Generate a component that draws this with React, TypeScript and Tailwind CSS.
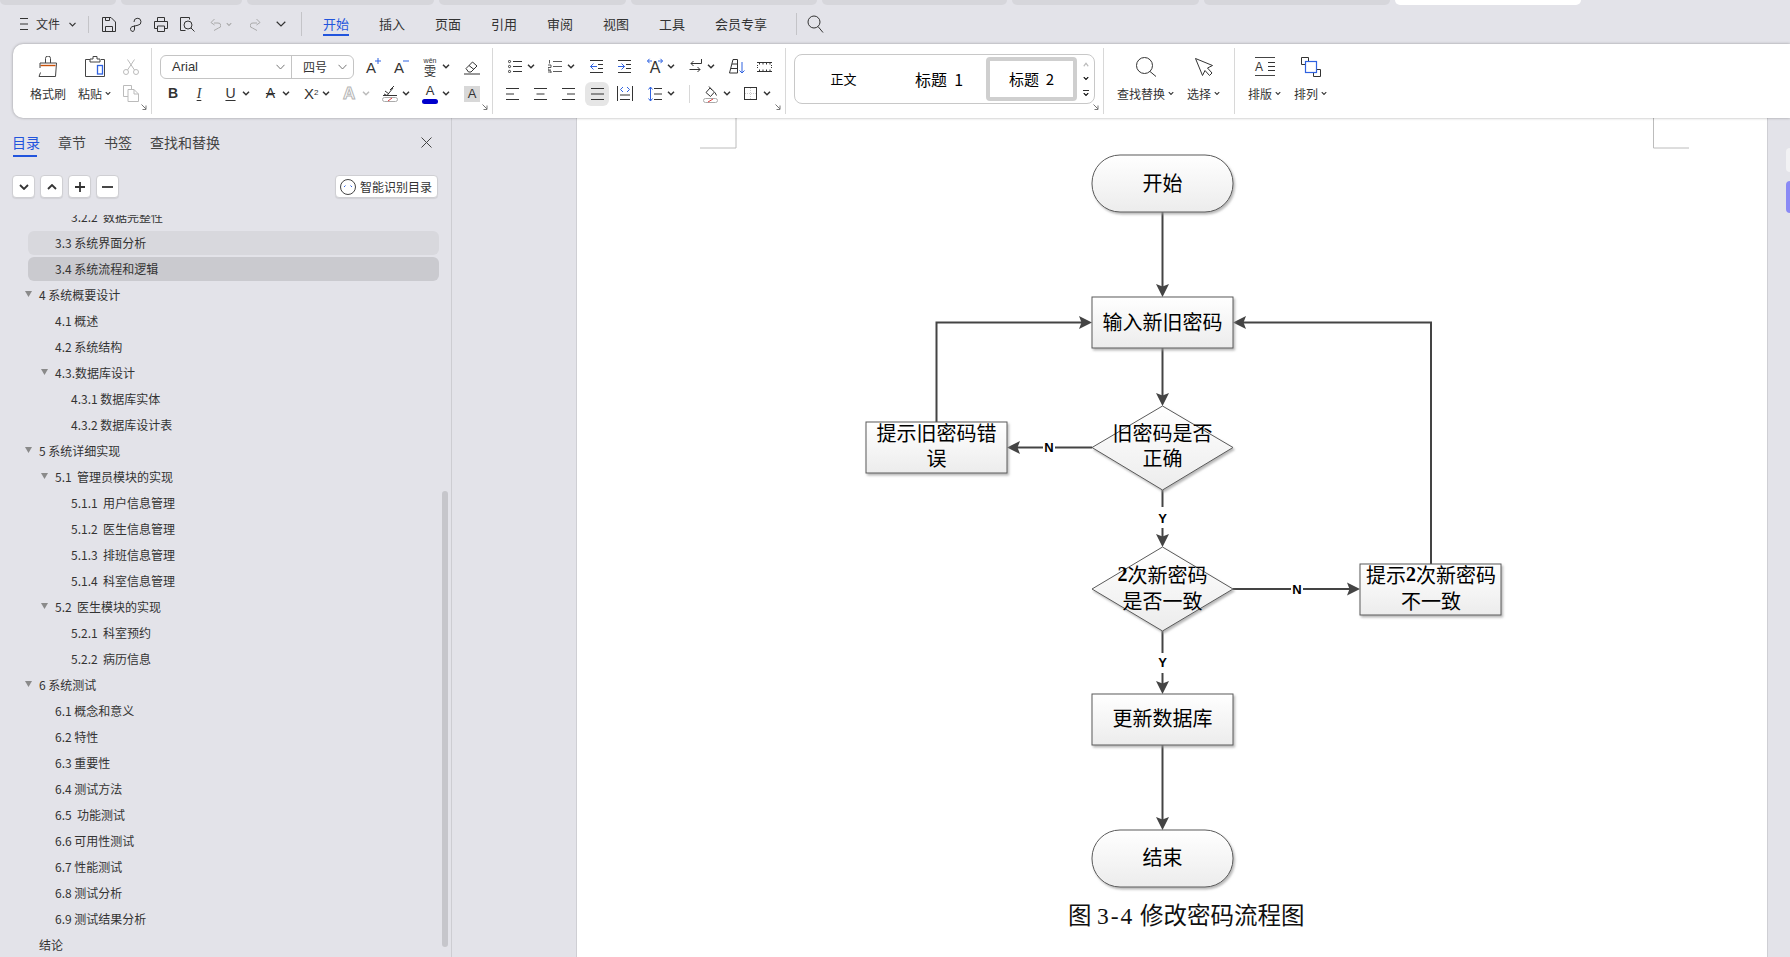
import type { ReactNode } from "react";

const tree: { text: string; level: 1 | 2 | 3; arrow?: boolean; mark?: 1 | 2 }[] = [
  { text: "3.2.2  数据完整性", level: 3 },
  { text: "3.3 系统界面分析", level: 2, mark: 1 },
  { text: "3.4 系统流程和逻辑", level: 2, mark: 2 },
  { text: "4 系统概要设计", level: 1, arrow: true },
  { text: "4.1 概述", level: 2 },
  { text: "4.2 系统结构", level: 2 },
  { text: "4.3.数据库设计", level: 2, arrow: true },
  { text: "4.3.1 数据库实体", level: 3 },
  { text: "4.3.2 数据库设计表", level: 3 },
  { text: "5 系统详细实现", level: 1, arrow: true },
  { text: "5.1  管理员模块的实现", level: 2, arrow: true },
  { text: "5.1.1  用户信息管理", level: 3 },
  { text: "5.1.2  医生信息管理", level: 3 },
  { text: "5.1.3  排班信息管理", level: 3 },
  { text: "5.1.4  科室信息管理", level: 3 },
  { text: "5.2  医生模块的实现", level: 2, arrow: true },
  { text: "5.2.1  科室预约", level: 3 },
  { text: "5.2.2  病历信息", level: 3 },
  { text: "6 系统测试", level: 1, arrow: true },
  { text: "6.1 概念和意义", level: 2 },
  { text: "6.2 特性", level: 2 },
  { text: "6.3 重要性", level: 2 },
  { text: "6.4 测试方法", level: 2 },
  { text: "6.5  功能测试", level: 2 },
  { text: "6.6 可用性测试", level: 2 },
  { text: "6.7 性能测试", level: 2 },
  { text: "6.8 测试分析", level: 2 },
  { text: "6.9 测试结果分析", level: 2 },
  { text: "结论", level: 1 },
];

const arial = "font-['Liberation_Sans','Noto_Sans_CJK_SC',sans-serif]";

function Ico({
  w,
  h,
  className = "",
  children,
}: {
  w: number;
  h: number;
  className?: string;
  children: ReactNode;
}) {
  return (
    <svg
      width={w}
      height={h}
      viewBox={`0 0 ${w} ${h}`}
      fill="none"
      stroke="currentColor"
      strokeWidth="1"
      className={"shrink-0 block " + className}
    >
      {children}
    </svg>
  );
}

function Caret({ className = "" }: { className?: string }) {
  return (
    <Ico w={8} h={5} className={className}>
      <path d="M1 .8 4 3.800 7 .8" strokeWidth="1.5" />
    </Ico>
  );
}

function Corner({ className = "" }: { className?: string }) {
  return (
    <Ico w={6} h={6} className={"absolute text-[#777] " + className}>
      <path d="M.5.5 5 5M5 1.500V5.500H1.500" />
    </Ico>
  );
}

function Blue({ d }: { d: string }) {
  return <path d={d} stroke="#2f62e0" />;
}

function MenuBar() {
  return (
    <div className="flex items-center h-[38px] mb-px text-[#333] text-[13px]">
      <Ico w={8} h={12} className="ml-[20px]">
        <path d="M0 .5h8M0 6h8M0 11.500h8" />
      </Ico>
      <span className="ml-[8px] w-[24px] text-[12px]">文件</span>
      <Ico w={7} h={5} className="ml-[9px]">
        <path d="M.5.8 3.500 3.800 6.500.8" strokeWidth="1.2" />
      </Ico>
      <div className="ml-[12px] w-px h-[17px] bg-[#c4c4c8]" />
      <Ico w={14} h={15} className="ml-[13px]">
        <path d="M.5.5h8.500l4.500 4.500v9.500H.5zM3.500 14.500V9.500h7v5M3.500.5v3h4v-3" />
      </Ico>
      <Ico w={12} h={15} className="ml-[14px]">
        <path d="M3 14.500a2.500 2.500 0 0 1-1-4.800l6-1.500A3.500 3.500 0 1 0 4 5M3 14.500a2.500 2.500 0 0 0 1.500-2.500V8.500" />
      </Ico>
      <Ico w={14} h={15} className="ml-[12px]">
        <path d="M3.500 4.500v-4h7v4M3.500 11.500H.5v-7h13v7h-3M3.500 9h7v5.500h-7z" />
      </Ico>
      <Ico w={15} h={15} className="ml-[12px]">
        <path d="M5.500 13.500h-5V.5h9v2" />
        <circle cx="8" cy="8" r="4" />
        <path d="M11 11l3.500 3.500" />
      </Ico>
      <Ico w={11} h={13} className="ml-[15px] text-[#aaa]">
        <path d="M4 5H8a2.500 2.500 0 0 1 .500 5L4 12.500M4.500 1 1 4.500 4.500 7" />
      </Ico>
      <Caret className="ml-[4px] text-[#aaa] scale-75" />
      <Ico w={11} h={13} className="ml-[17px] text-[#aaa]">
        <path d="M7 5H3a2.500 2.500 0 0 0-.500 5L7 12.500M6.500 1 10 4.500 6.500 7" />
      </Ico>
      <Ico w={10} h={6} className="ml-[15px]">
        <path d="M.7.8 5 5 9.300.8" strokeWidth="1.2" />
      </Ico>
      <div className="ml-[15px] w-px h-[24px] bg-[#c4c4c8]" />
      <div className="ml-[21px] flex gap-[30px]">
        <span className="relative text-[#2255dd]">
          开始
          <span className="absolute left-0 right-0 -bottom-[2px] h-[2px] bg-[#2255dd]" />
        </span>
        <span>插入</span>
        <span>页面</span>
        <span>引用</span>
        <span>审阅</span>
        <span>视图</span>
        <span>工具</span>
        <span>会员专享</span>
      </div>
      <div className="ml-[29px] w-px h-[22px] bg-[#c4c4c8]" />
      <Ico w={17} h={18} className="ml-[10px]">
        <circle cx="7" cy="7" r="6" />
        <path d="M11 11.500l5 6" />
      </Ico>
    </div>
  );
}

function Ribbon() {
  return (
    <div className="relative z-10 ml-[13px] flex items-center h-[74px] bg-white rounded-l-[10px] shadow-[0_0_3px_rgba(0,0,0,0.35)] text-[#333] text-[12px]">
      {/* clipboard */}
      <div className="relative flex h-[66px] w-[139px] pl-[9px] pt-[6px] border-r border-[#d8d8d8]">
        <div className="w-[52px] flex flex-col items-center">
          <div className="h-[25px] flex items-center">
            <Ico w={20} h={21} className="text-[#444]">
              <path d="M7.500 7V2.500a2.500 2.500 0 0 1 5 0V7M2 7h16.500l-1 13.500H1l1.500-4" />
              <path d="M2.500 9.500h15" stroke="#c8500a" strokeWidth="1.4" />
              <path d="M2 7v5" />
            </Ico>
          </div>
          <span className="mt-[2px] leading-[25px]">格式刷</span>
        </div>
        <div className="w-[42px] flex flex-col items-center">
          <div className="h-[25px] flex items-center">
            <Ico w={20} h={21} className="text-[#444]">
              <path d="M5 3.500H.5v17h19V3.500H16M5 6V3h3V.5h4V3h3v3z" />
              <rect x="12.500" y="9.500" width="5" height="8.500" stroke="#2f62e0" strokeWidth="1.3" />
            </Ico>
          </div>
          <div className="mt-[2px] flex items-center h-[25px]">
            <span>粘贴</span>
            <Caret className="ml-[2px] scale-75" />
          </div>
        </div>
        <div className="w-[30px] flex flex-col items-center gap-[2px]">
          <div className="h-[25px] flex items-center">
            <Ico w={16} h={16} className="text-[#bbb]">
              <circle cx="3" cy="13" r="2.500" />
              <circle cx="13" cy="13" r="2.500" />
              <path d="M4.500 11 11.500.5M11.500 11 4.500.5" />
            </Ico>
          </div>
          <div className="h-[25px] flex items-center">
            <Ico w={16} h={17} className="text-[#bbb]">
              <path d="M5 11.500H.5V.5h8v4M5 4.500h6l4.500 4.500v7.500H5zM11 4.500V9h4.500" />
            </Ico>
          </div>
        </div>
        <Corner className="right-[4px] bottom-[4px]" />
      </div>

      {/* font */}
      <div className="relative h-[66px] w-[341px] pt-[6px] border-r border-[#d8d8d8]">
        <div className="flex items-center h-[25px]">
          <div className="ml-[8px] w-[194px] h-[24px] flex items-center rounded-md border border-[#c4c4c4]">
            <div className="w-[131px] h-full flex items-center justify-between pl-[11px] pr-[6px] border-r border-[#c4c4c4]">
              <span className={arial + " text-[13px]"}>Arial</span>
              <Ico w={9} h={6} className="text-[#777]">
                <path d="M.5.8 4.500 5 8.500.8" />
              </Ico>
            </div>
            <div className="flex-1 flex items-center justify-between pl-[11px] pr-[6px]">
              <span>四号</span>
              <Ico w={9} h={6} className="text-[#777]">
                <path d="M.5.8 4.500 5 8.500.8" />
              </Ico>
            </div>
          </div>
          <div className={"ml-[12px] w-[14px] h-[20px] relative text-[15px] leading-[22px] " + arial}>
            A
            <Ico w={6} h={6} className="absolute right-[-1px] top-[1px]">
              <Blue d="M3 0v6M0 3h6" />
            </Ico>
          </div>
          <div className={"ml-[14px] w-[14px] h-[20px] relative text-[15px] leading-[22px] " + arial}>
            A
            <Ico w={6} h={2} className="absolute right-[-1px] top-[3px]">
              <Blue d="M0 1h6" />
            </Ico>
          </div>
          <div className="ml-[14px] w-[16px] h-[20px] flex flex-col items-center leading-none">
            <span className={"text-[7px] leading-[8px] " + arial}>wěn</span>
            <span className="text-[12px] leading-[12px]">雯</span>
          </div>
          <Caret className="ml-[4px]" />
          <Ico w={16} h={16} className="ml-[14px]">
            <path d="M2 9.500 8.500 3l4.500 4-6 6H4.500zM5 6.500l5 4M0 15h16" />
          </Ico>
        </div>
        <div className={"mt-[2px] flex items-center h-[25px] text-[14px] " + arial}>
          <span className="ml-[16px] w-[9px] font-bold">B</span>
          <span className="ml-[17px] w-[10px] italic underline underline-offset-2 font-['Liberation_Serif',serif] text-center">I</span>
          <span className="ml-[21px] w-[11px] underline underline-offset-2 text-center">U</span>
          <Caret className="ml-[6px]" />
          <span className="ml-[13px] w-[15px] line-through text-center font-light">A</span>
          <Caret className="ml-[4px]" />
          <span className="ml-[14px] w-[13px] text-[15px] leading-none">
            X<sup className="text-[8px]">2</sup>
          </span>
          <Caret className="ml-[5px]" />
          <span className="ml-[13px] w-[14px] text-[17px] font-bold text-transparent [-webkit-text-stroke:1px_#b5b5b5]">A</span>
          <Caret className="ml-[5px] text-[#bbb]" />
          <Ico w={16} h={17} className="ml-[12px]">
            <path d="M2 9 5 10.500 11 3M3 6l4 3M12 1 8 5M1 10.500h14" />
            <rect x=".5" y="12.500" width="15" height="4" rx="2" stroke="#aaa" />
            <path d="M6 16l4-3" stroke="#e03c3c" />
          </Ico>
          <Caret className="ml-[4px]" />
          <div className="ml-[12px] w-[16px] h-[20px] flex flex-col items-center leading-[14px]">
            <span className="text-[13px]">A</span>
            <span className="w-[16px] h-[5px] mt-[1px] rounded-full bg-[#0000cc]" />
          </div>
          <Caret className="ml-[4px]" />
          <span className="ml-[14px] w-[16px] h-[16px] bg-[#d8d8d8] text-center text-[13px] leading-[16px]">A</span>
        </div>
        <Corner className="right-[4px] bottom-[4px]" />
      </div>

      {/* paragraph */}
      <div className="relative h-[66px] w-[293px] pt-[6px] border-r border-[#d8d8d8]">
        <div className="flex items-center h-[25px]">
          <Ico w={14} h={13} className="ml-[15px]">
            <circle cx="1.500" cy="1.500" r="1.100" />
            <circle cx="1.500" cy="6.500" r="1.100" />
            <circle cx="1.500" cy="11.500" r="1.100" />
            <path d="M5 1.500h9M5 6.500h9M5 11.500h9" />
          </Ico>
          <Caret className="ml-[5px]" />
          <Ico w={14} h={13} className="ml-[13px]">
            <path d="M1.500 0v3.500M0 5h3v2.500H0V10h3M0 11h3v2H0M5 1.500h9M5 6.500h9M5 11.500h9" strokeWidth=".8" />
          </Ico>
          <Caret className="ml-[5px]" />
          <Ico w={13} h={13} className="ml-[15px]">
            <path d="M0 .5h13M0 12.500h13M8 4.500h5M8 8.500h5" />
            <Blue d="M.5 6.500H7M3.500 3.500l-3 3 3 3" />
          </Ico>
          <Ico w={13} h={13} className="ml-[15px]">
            <path d="M0 .5h13M0 12.500h13M8 4.500h5M8 8.500h5" />
            <Blue d="M0 6.500H6.500M3.500 3.500l3 3-3 3" />
          </Ico>
          <div className="relative ml-[16px] w-[16px] h-[18px] flex justify-center items-end">
            <Ico w={16} h={6} className="absolute left-0 top-0">
              <Blue d="M.5 3h4.500M2.500 .8.5 3l2 2.200M15.500 3H11M13.500 .8 15.500 3l-2 2.200" />
            </Ico>
            <span className={"text-[16px] leading-[16px] " + arial}>A</span>
          </div>
          <Caret className="ml-[4px]" />
          <Ico w={13} h={15} className="ml-[14px]">
            <path d="M12.500 0v4.500H2M4.500 2 2 4.500 4.500 7M.5 10.500H11M8.500 8 11 10.500 8.500 13" />
          </Ico>
          <Caret className="ml-[5px]" />
          <Ico w={16} h={15} className="ml-[14px]">
            <path d="M.5 14 4 .5h4.500V14zM3 5h5.500M2 9.500h6.500" />
            <Blue d="M13 3v11M10.500 11.500 13 14l2.500-2.500" />
          </Ico>
          <Ico w={15} h={12} className="ml-[12px]">
            <path d="M0 1.500h15M0 10.500h15M2.500 1.500v2M6 1.500v2M9.500 1.500v2M13 1.500v2M2.500 8.500v2M6 8.500v2M9.500 8.500v2M13 8.500v2" />
            <path d="M.5 4v4M14.500 4v4" strokeDasharray="1 1" />
          </Ico>
        </div>
        <div className="mt-[2px] flex items-center h-[25px]">
          <Ico w={13} h={12} className="ml-[13px]">
            <path d="M0 .5h13M0 6h8M0 11.500h13" />
          </Ico>
          <Ico w={13} h={12} className="ml-[15px]">
            <path d="M0 .5h13M2.500 6h8M0 11.500h13" />
          </Ico>
          <Ico w={13} h={12} className="ml-[15px]">
            <path d="M0 .5h13M5 6h8M0 11.500h13" />
          </Ico>
          <div className="ml-[10px] w-[24px] h-[24px] rounded-md bg-[#e6e6e6] flex items-center justify-center">
            <Ico w={13} h={12}>
              <path d="M0 .5h13M0 6h13M0 11.500h13" />
            </Ico>
          </div>
          <Ico w={16} h={15} className="ml-[8px]">
            <path d="M.5 0v15M15.500 0v15M3 9h10M3 13.500h10" />
            <Blue d="M6 1 3.500 3.500 6 6M10 1l2.500 2.500L10 6" />
          </Ico>
          <Ico w={14} h={16} className="ml-[15px]">
            <path d="M6 2.500h8M6 8h8M6 13.500h8" />
            <Blue d="M2.500 1v14M.5 3.500l2-2.500 2 2.500M.5 12.500l2 2.500 2-2.500" />
          </Ico>
          <Caret className="ml-[5px]" />
          <div className="ml-[14px] w-px h-[18px] bg-[#d8d8d8]" />
          <Ico w={15} h={18} className="ml-[13px]">
            <path d="M3 7.500 7 3l4.500 4-4 4.500zM6 1.500 9 5M12 7.500l1.500 3" />
            <rect x=".5" y="13.500" width="14" height="4" rx="2" stroke="#aaa" />
            <path d="M5 17l5-3" stroke="#e03c3c" />
          </Ico>
          <Caret className="ml-[5px]" />
          <Ico w={13} h={13} className="ml-[13px]">
            <path d="M6.500 1v11M1 6.500h11" stroke="#ccc" strokeDasharray="1 1" />
            <rect x=".5" y=".5" width="12" height="12" />
          </Ico>
          <Caret className="ml-[6px]" />
        </div>
        <Corner className="right-[4px] bottom-[4px]" />
      </div>

      {/* styles */}
      <div className="relative h-[66px] w-[318px] pt-[6px] pl-[8px] border-r border-[#d8d8d8]">
        <div className="w-[301px] h-[50px] flex items-center rounded-lg border border-[#c8c8c8] text-[13px] text-black">
          <span className="w-[97px] text-center">正文</span>
          <span className="w-[94px] text-center text-[16px] whitespace-pre">标题  1</span>
          <span className="w-[91px] h-[44px] flex items-center justify-center text-[15px] whitespace-pre rounded-[4px] border-[4px] border-[#cfcfcf]">标题  2</span>
          <div className="w-[17px] flex flex-col items-center gap-[9px]">
            <Caret className="text-[#bbb] scale-y-[-1] scale-x-75" />
            <Caret className="scale-75" />
            <div className="flex flex-col items-center">
              <span className="w-[6px] h-px bg-[#333] mb-px" />
              <Caret className="scale-75" />
            </div>
          </div>
        </div>
        <Corner className="right-[4px] bottom-[4px]" />
      </div>

      {/* find */}
      <div className="flex h-[66px] w-[131px] pl-[8px] pt-[6px] border-r border-[#d8d8d8]">
        <div className="w-[68px] flex flex-col items-center">
          <div className="h-[25px] flex items-center">
            <Ico w={21} h={20}>
              <circle cx="8.500" cy="8.500" r="8" />
              <path d="M14 14.500l6 5" />
            </Ico>
          </div>
          <div className="mt-[2px] h-[25px] flex items-center">
            <span>查找替换</span>
            <Caret className="ml-[2px] scale-75" />
          </div>
        </div>
        <div className="w-[48px] flex flex-col items-center">
          <div className="h-[25px] flex items-center">
            <Ico w={18} h={18}>
              <path d="M.5.5 17.500 7.500l-5 2.500 4.500 5-2.500 2.500-4.500-5-2.500 5z" />
            </Ico>
          </div>
          <div className="mt-[2px] h-[25px] flex items-center">
            <span>选择</span>
            <Caret className="ml-[2px] scale-75" />
          </div>
        </div>
      </div>

      {/* layout */}
      <div className="flex h-[66px] pl-[7px] pt-[6px]">
        <div className="w-[46px] flex flex-col items-center">
          <div className="h-[25px] flex items-center">
            <div className="w-[20px] h-[19px] flex items-center justify-between border-y border-[#444] text-[12px] leading-none">
              <span className={arial}>A</span>
              <Ico w={7} h={9}>
                <path d="M0 .5h7M0 4.500h7M0 8.500h7" />
              </Ico>
            </div>
          </div>
          <div className="mt-[2px] h-[25px] flex items-center">
            <span>排版</span>
            <Caret className="ml-[2px] scale-75" />
          </div>
        </div>
        <div className="w-[46px] flex flex-col items-center">
          <div className="h-[25px] flex items-center">
            <Ico w={20} h={20}>
              <path d="M4.500 7.500H.5v-7h7v4M12.500 15.500v4h7v-7h-4" />
              <rect x="4.500" y="4.500" width="11" height="11" stroke="#2f62e0" strokeWidth="1.2" />
            </Ico>
          </div>
          <div className="mt-[2px] h-[25px] flex items-center">
            <span>排列</span>
            <Caret className="ml-[2px] scale-75" />
          </div>
        </div>
      </div>
    </div>
  );
}

function SquareBtn({ children }: { children: ReactNode }) {
  return (
    <div className="w-[23px] h-[23px] flex items-center justify-center rounded-[4px] bg-white border border-[#cfcfd3] shadow-[0_1px_1px_rgba(0,0,0,0.08)] text-[#333]">
      {children}
    </div>
  );
}

function Sidebar() {
  return (
    <aside className="relative w-[452px] shrink-0 flex flex-col border-r border-[#cdcdd2] overflow-hidden text-[#333]">
      <div className="pt-[14px] pl-[12px] pr-[19px] flex items-center gap-[18px] text-[14px] leading-[20px] text-[#444]">
        <span className="relative text-[#2255dd]">
          目录
          <span className="absolute left-[1px] right-[3px] -bottom-[5px] h-[2px] bg-[#2255dd]" />
        </span>
        <span>章节</span>
        <span>书签</span>
        <span>查找和替换</span>
        <Ico w={11} h={11} className="ml-auto text-[#444]">
          <path d="M.5.5l10 10M10.500.5l-10 10" />
        </Ico>
      </div>
      <div className="mt-[23px] pl-[12px] pr-[13px] flex items-center gap-[5px]">
        <SquareBtn>
          <Ico w={10} h={6}>
            <path d="M1 1l4 4 4-4" strokeWidth="1.8" />
          </Ico>
        </SquareBtn>
        <SquareBtn>
          <Ico w={10} h={6}>
            <path d="M1 5l4-4 4 4" strokeWidth="1.8" />
          </Ico>
        </SquareBtn>
        <SquareBtn>
          <Ico w={10} h={10}>
            <path d="M5 0v10M0 5h10" strokeWidth="1.8" />
          </Ico>
        </SquareBtn>
        <SquareBtn>
          <Ico w={11} h={2}>
            <path d="M0 1h11" strokeWidth="1.8" />
          </Ico>
        </SquareBtn>
        <div className="ml-auto w-[103px] h-[23px] flex items-center rounded-[4px] bg-white border border-[#cfcfd3] shadow-[0_1px_1px_rgba(0,0,0,0.08)] text-[12px] leading-none">
          <Ico w={16} h={16} className="ml-[4px] text-[#444]">
            <circle cx="8" cy="8" r="7.500" />
            <Blue d="M4 8l1.500-1.500M10.500 6.500 12 8" />
          </Ico>
          <span className="ml-[4px]">智能识别目录</span>
        </div>
      </div>
      <div className="mt-[17px] flex-1 overflow-hidden">
        <div className="-mt-[10px] text-[12px] leading-[24px]">
          {tree.map((row) => {
            const pad = row.level === 1 ? (row.arrow ? "pl-[25px]" : "pl-[39px]") : row.level === 2 ? (row.arrow ? "pl-[41px]" : "pl-[55px]") : "pl-[71px]";
            const mark = row.mark === 1 ? "bg-[#d8d8dd] rounded-md" : row.mark === 2 ? "bg-[#cacacf] rounded-md" : "";
            return (
              <div key={row.text} className="h-[24px] mb-[2px] w-[439px] relative flex items-center whitespace-pre">
                {row.mark && <div className={"absolute left-[28px] right-0 top-0 bottom-0 " + mark} />}
                <div className={"relative flex items-center " + pad}>
                  {row.arrow && (
                    <svg width="7" height="6" viewBox="0 0 7 6" className="mr-[7px] shrink-0 mb-[2px]">
                      <path d="M0 0h7L3.500 6z" fill="#8a8a8a" />
                    </svg>
                  )}
                  <span>{row.text}</span>
                </div>
              </div>
            );
          })}
        </div>
      </div>
      <div className="absolute left-[442px] top-[373px] w-[6px] h-[456px] rounded-full bg-[#c6c6cb]" />
    </aside>
  );
}

const node = { stroke: "#5a5a5a", fill: "url(#shade)", filter: "url(#drop)" };

function Down({ x, y1, y2 }: { x: number; y1: number; y2: number }) {
  return (
    <>
      <line x1={x} y1={y1} x2={x} y2={y2 - 10} stroke="#444" strokeWidth="2" />
      <path d={`M${x} ${y2} L${x - 6.500} ${y2 - 13} L${x} ${y2 - 10.500} L${x + 6.500} ${y2 - 13} Z`} fill="#444" />
    </>
  );
}

function Head({ x, y, dir }: { x: number; y: number; dir: 1 | -1 }) {
  return <path d={`M${x} ${y} L${x - dir * 13} ${y - 6.500} L${x - dir * 10.500} ${y} L${x - dir * 13} ${y + 6.500} Z`} fill="#444" />;
}

function Flowchart() {
  const label = "fill-black text-[20px]";
  const tag = "fill-black text-[13px] font-bold font-['Liberation_Sans',sans-serif]";
  const two = "font-bold font-['Liberation_Serif',serif]";
  const cap = "font-['Liberation_Serif','Noto_Sans_CJK_SC',serif]";
  return (
    <svg width="1190" height="839" viewBox="577 118 1190 839" className="block">
      <defs>
        <linearGradient id="shade" x1="0" y1="0" x2="0" y2="1">
          <stop offset="0" stopColor="#ffffff" />
          <stop offset="1" stopColor="#ececec" />
        </linearGradient>
        <filter id="drop" x="-10%" y="-10%" width="125%" height="130%">
          <feDropShadow dx="1.500" dy="2" stdDeviation="1" floodColor="#999" floodOpacity="0.7" />
        </filter>
      </defs>

      <path d="M736 118V148H700M1653.500 118V148H1689" fill="none" stroke="#bcbcbc" />

      <Down x={1162.500} y1={212} y2={297} />
      <Down x={1162.500} y1={348} y2={406} />
      <line x1={1162.500} y1={490} x2={1162.500} y2={507} stroke="#444" strokeWidth="2" />
      <Down x={1162.500} y1={528} y2={547} />
      <line x1={1162.500} y1={631} x2={1162.500} y2={653} stroke="#444" strokeWidth="2" />
      <Down x={1162.500} y1={673} y2={694} />
      <Down x={1162.500} y1={745} y2={830} />

      <line x1={1092} y1={447.500} x2={1055} y2={447.500} stroke="#444" strokeWidth="2" />
      <line x1={1043} y1={447.500} x2={1015} y2={447.500} stroke="#444" strokeWidth="2" />
      <Head x={1007} y={447.500} dir={-1} />
      <path d="M936.500 422V322.500H1082" fill="none" stroke="#444" strokeWidth="2" />
      <Head x={1092} y={322.500} dir={1} />
      <line x1={1233} y1={589} x2={1291} y2={589} stroke="#444" strokeWidth="2" />
      <line x1={1303} y1={589} x2={1350} y2={589} stroke="#444" strokeWidth="2" />
      <Head x={1360} y={589} dir={1} />
      <path d="M1431 564V322.500H1243" fill="none" stroke="#444" strokeWidth="2" />
      <Head x={1233} y={322.500} dir={-1} />

      <rect x={1092} y={155} width={141} height={57} rx={28} {...node} />
      <rect x={1092} y={297} width={141} height={51} {...node} />
      <rect x={866} y={422} width={141} height={51} {...node} />
      <path d="M1162.500 406 1233 447.500 1162.500 490 1092 447.500Z" {...node} />
      <path d="M1162.500 547 1233 589 1162.500 631 1092 589Z" {...node} />
      <rect x={1360} y={564} width={141} height={51} {...node} />
      <rect x={1092} y={694} width={141} height={51} {...node} />
      <rect x={1092} y={830} width={141} height={57} rx={28} {...node} />

      <g textAnchor="middle" dominantBaseline="central">
        <text x={1162.500} y={182} className={label}>开始</text>
        <text x={1162.500} y={321} className={label}>输入新旧密码</text>
        <text x={936.500} y={432} className={label}>提示旧密码错</text>
        <text x={936.500} y={457} className={label}>误</text>
        <text x={1162.500} y={432} className={label}>旧密码是否</text>
        <text x={1162.500} y={457} className={label}>正确</text>
        <text x={1162.500} y={574} className={label}><tspan className={two}>2</tspan>次新密码</text>
        <text x={1162.500} y={600} className={label}>是否一致</text>
        <text x={1431} y={574} className={label}>提示<tspan className={two}>2</tspan>次新密码</text>
        <text x={1431} y={600} className={label}>不一致</text>
        <text x={1162.500} y={717} className={label}>更新数据库</text>
        <text x={1162.500} y={856} className={label}>结束</text>
        <text x={1049} y={447.500} className={tag}>N</text>
        <text x={1297} y={589} className={tag}>N</text>
        <text x={1162.500} y={518} className={tag}>Y</text>
        <text x={1162.500} y={662} className={tag}>Y</text>
      </g>
      <text y={916} dominantBaseline="central" className={"fill-[#111] text-[23.5px] " + cap}>
        <tspan x={1068}>图 </tspan>
        <tspan x={1097} className="tracking-[2px]">3-4 </tspan>
        <tspan x={1140}>修改密码流程图</tspan>
      </text>
    </svg>
  );
}

export default function App() {
  return (
    <div className="w-[1790px] h-[957px] overflow-hidden bg-[#e3e3e9] flex flex-col font-['Noto_Sans_CJK_SC',sans-serif]">
      <div className="h-[5px] flex gap-[5px]">
        <div className="w-[116px] rounded-b-[6px] bg-[#d6d6db]" />
        <div className="w-[121px] rounded-b-[6px] bg-[#d6d6db]" />
        <div className="w-[187px] rounded-b-[6px] bg-[#d6d6db]" />
        <div className="w-[187px] rounded-b-[6px] bg-[#d6d6db]" />
        <div className="w-[186px] rounded-b-[6px] bg-[#d6d6db]" />
        <div className="w-[185px] rounded-b-[6px] bg-[#d6d6db]" />
        <div className="w-[187px] rounded-b-[6px] bg-[#d6d6db]" />
        <div className="w-[186px] rounded-b-[6px] bg-[#d6d6db]" />
        <div className="w-[186px] rounded-b-[6px] bg-white" />
      </div>
      <MenuBar />
      <Ribbon />
      <main className="flex flex-1 min-h-0">
        <Sidebar />
        <div className="w-[124px] shrink-0" />
        <div className="w-[1192px] shrink-0 bg-white border-x border-[#cfcfd4]">
          <Flowchart />
        </div>
        <div className="flex-1 flex flex-col items-end pt-[30px] gap-[9px]">
          <div className="w-[4px] h-[24px] rounded-l-[4px] bg-[#f2f2f4]" />
          <div className="w-[4px] h-[32px] rounded-l-[4px] bg-[#8a8af5]" />
        </div>
      </main>
    </div>
  );
}
